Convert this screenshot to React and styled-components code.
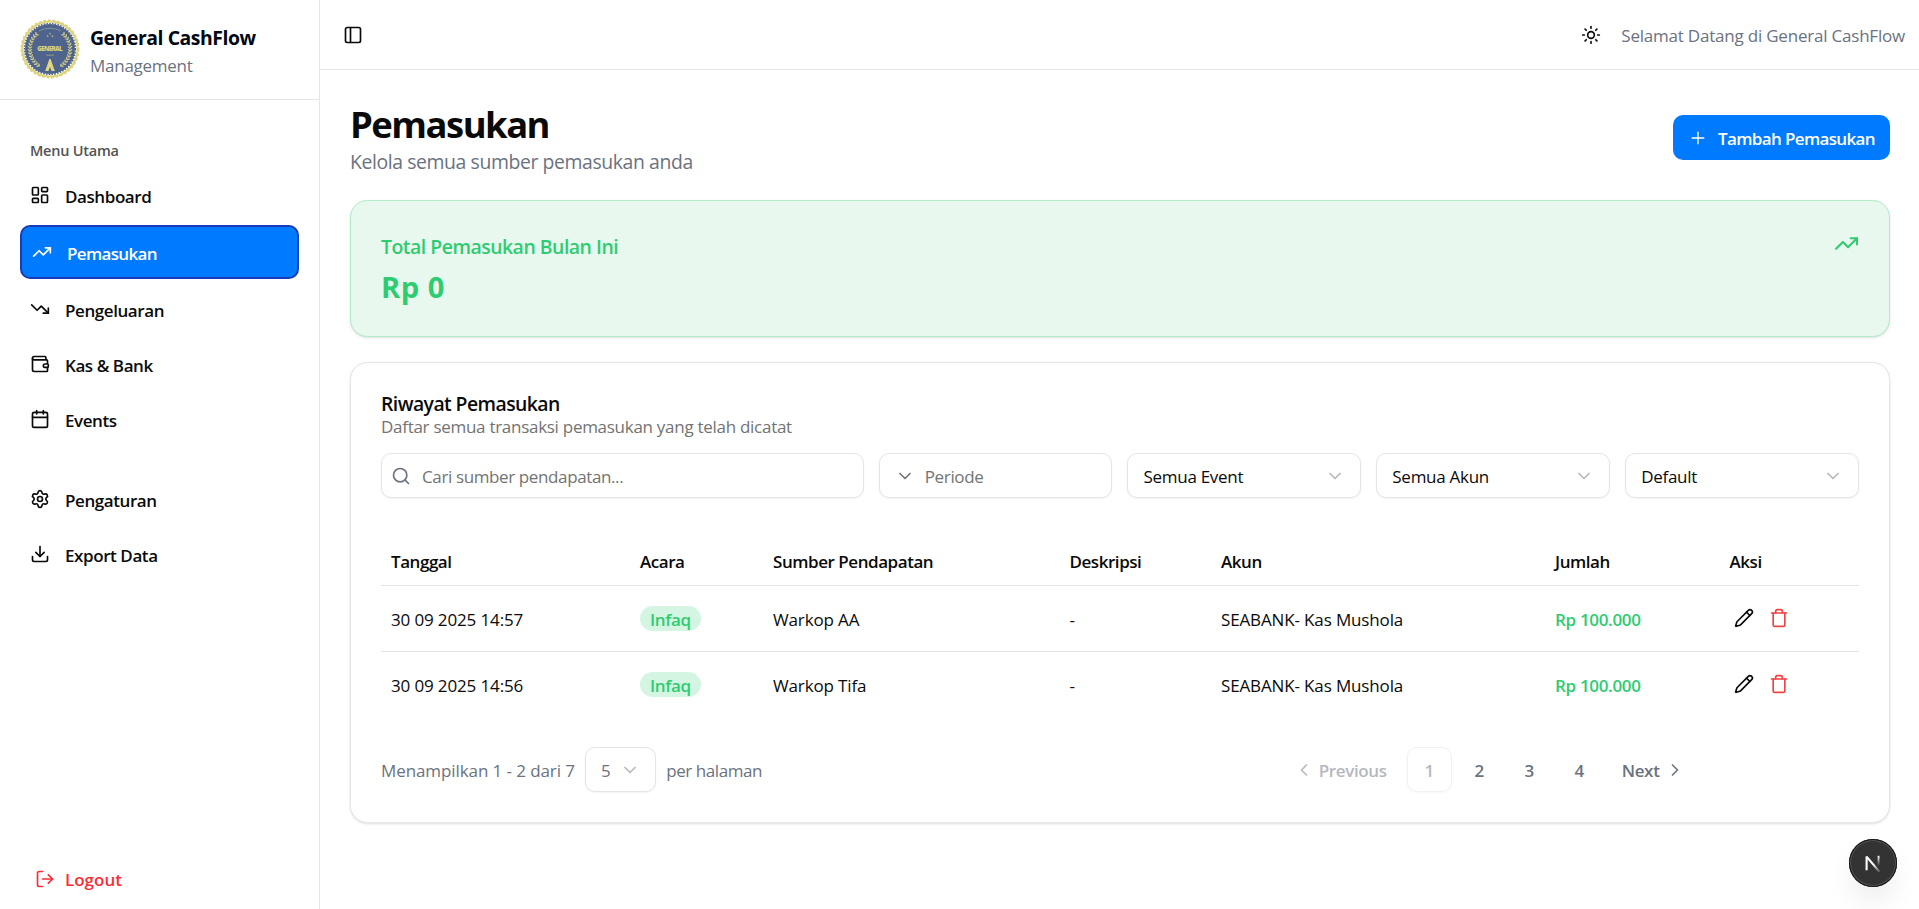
import React from 'react';
import styled, { createGlobalStyle, css } from 'styled-components';
import {
  LayoutDashboard, TrendingUp, TrendingDown, Wallet, Calendar, Settings, Download,
  LogOut, PanelLeft, Sun, Plus, Search, ChevronDown, ChevronLeft, ChevronRight, Pencil, Trash,
} from 'lucide-react';

const GlobalStyle = createGlobalStyle`
  *, *::before, *::after { box-sizing: border-box; }
  body {
    margin: 0;
    background: #fff;
    color: #0a0a0a;
    font-family: "Segoe UI", "Open Sans", "Noto Sans", sans-serif;
    font-size: 17px;
    line-height: 25px;
    overflow: hidden;
  }
  h1, h2, p { margin: 0; }
  button, input { font: inherit; letter-spacing: inherit; color: inherit; }
  svg { display: block; flex: none; }
`;

const border = '#e5e5e5';
const muted = '#6b7280';
const green = '#2ecc71';
const blue = '#007bff';

const Shell = styled.div`
  display: flex;
  height: 100vh;
`;

const Sidebar = styled.aside`
  display: flex;
  flex-direction: column;
  width: 320px;
  flex: none;
  border-right: 1px solid ${border};
`;

const Brand = styled.div`
  display: flex;
  align-items: center;
  gap: 10px;
  height: 100px;
  padding: 0 20px 1px;
  border-bottom: 1px solid ${border};
`;

const BrandText = styled.div`
  display: flex;
  flex-direction: column;
  padding-top: 3px;
`;

const BrandName = styled.span`
  font-size: 19.4px;
  font-weight: 700;
  line-height: 30px;
  letter-spacing: -0.44px;
  color: #030712;
`;

const BrandSub = styled.span`
  color: ${muted};
  letter-spacing: -0.26px;
`;

const Nav = styled.nav`
  display: flex;
  flex-direction: column;
  gap: 30px;
  flex: 1;
  padding: 30px 20px;
`;

const NavGroup = styled.div`
  display: flex;
  flex-direction: column;
  gap: 5px;
`;

const NavLabel = styled.div`
  display: flex;
  align-items: center;
  height: 40px;
  margin-bottom: -5px;
  padding: 0 10px;
  font-size: 14.5px;
  font-weight: 550;
  letter-spacing: -0.24px;
  color: #525252;
`;

const NavItem = styled.a`
  display: flex;
  align-items: center;
  gap: 15px;
  height: 50px;
  padding: 0 10px;
  border-radius: 10px;
  font-weight: 570;
  letter-spacing: -0.42px;

  ${(p) => p.$active && css`
    height: 54px;
    border: 2px solid #193cb8;
    background: ${blue};
    color: #fff;
    letter-spacing: -0.65px;
  `}
`;

const NavText = styled.span`
  padding-top: 2px;
`;

const LogoutButton = styled.a`
  display: flex;
  align-items: center;
  gap: 10px;
  height: 50px;
  margin: 0 20px 5px;
  padding: 0 15px;
  font-weight: 570;
  color: #fb2c36;
`;

const Content = styled.div`
  flex: 1;
  min-width: 0;
  display: flex;
  flex-direction: column;
`;

const Topbar = styled.header`
  display: flex;
  align-items: center;
  height: 70px;
  padding: 0 14px 0 23px;
  border-bottom: 1px solid ${border};
`;

const Greeting = styled.span`
  margin-left: 20px;
  padding-top: 1px;
  letter-spacing: -0.21px;
  color: ${muted};
`;

const Spacer = styled.div`
  flex: 1;
`;

const Main = styled.main`
  display: flex;
  flex-direction: column;
  gap: 25px;
  padding: 30px 29px 30px 30px;
`;

const PageHead = styled.div`
  display: flex;
  align-items: center;
  justify-content: space-between;
  height: 75px;
`;

const PageHeading = styled.div`
  padding-top: 3px;
`;

const PageTitle = styled.h1`
  font-size: 36.4px;
  font-weight: 700;
  line-height: 45px;
  letter-spacing: -1.5px;
`;

const PageSub = styled.p`
  font-size: 19.4px;
  line-height: 29px;
  letter-spacing: -0.4px;
  color: ${muted};
`;

const PrimaryButton = styled.button`
  display: flex;
  align-items: center;
  gap: 10px;
  height: 45px;
  padding: 1px 15px 0;
  border: 0;
  border-radius: 10px;
  background: ${blue};
  color: #fff;
  font-weight: 570;
  letter-spacing: -0.64px;
`;

const Card = styled.section`
  padding: 30px;
  border: 1px solid ${border};
  border-radius: 17.5px;
  background: #fff;
  box-shadow: 0 1px 3px rgba(0, 0, 0, 0.1), 0 1px 2px -1px rgba(0, 0, 0, 0.1);
`;

const SummaryCard = styled(Card)`
  display: flex;
  justify-content: space-between;
  height: 137px;
  border-color: #b1ebc9;
  background: #e9f8ef;
  color: ${green};
`;

const SummaryLabel = styled.p`
  padding-top: 1px;
  font-size: 19.4px;
  font-weight: 570;
  line-height: 30px;
  letter-spacing: -0.48px;
`;

const SummaryValue = styled.p`
  margin-top: 5px;
  font-size: 29.1px;
  font-weight: 700;
  line-height: 40px;
  letter-spacing: 0.5px;
`;

const CardTitle = styled.h2`
  height: 20px;
  font-size: 19.4px;
  font-weight: 600;
  line-height: 22px;
  letter-spacing: -0.57px;
`;

const CardSub = styled.p`
  height: 25px;
  line-height: 27px;
  color: #737373;
  letter-spacing: -0.28px;
`;

const Filters = styled.div`
  display: grid;
  grid-template-columns: repeat(6, 1fr);
  gap: 15px;
  margin-top: 15px;
`;

const field = css`
  display: flex;
  align-items: center;
  height: 45px;
  border: 1px solid ${border};
  border-radius: 10px;
  background: #fff;
  box-shadow: 0 1px 2px rgba(0, 0, 0, 0.05);
`;

const SearchField = styled.label`
  ${field}
  grid-column: span 2;
  gap: 11px;
  padding: 0 9px;
  color: ${muted};
`;

const SearchInput = styled.input`
  flex: 1;
  min-width: 0;
  border: 0;
  padding: 1px 0 0;
  outline: 0;
  background: none;
  letter-spacing: -0.38px;
  &::placeholder { color: #737373; opacity: 1; }
`;

const FieldText = styled.span`
  padding-top: 2px;
`;

const PeriodField = styled.button`
  ${field}
  gap: 10px;
  padding: 0 15px;
  color: #737373;
  letter-spacing: -0.33px;
`;

const SelectField = styled.button`
  ${field}
  justify-content: space-between;
  gap: 10px;
  padding: 0 15px;
  color: ${(p) => (p.$muted ? muted : 'inherit')};
  letter-spacing: -0.28px;
  svg { color: #737373; opacity: 0.5; }
`;

const Table = styled.table`
  width: 100%;
  margin-top: 37px;
  border-collapse: separate;
  border-spacing: 0;
  table-layout: fixed;
`;

const Col = styled.col`
  width: ${(p) => p.$w}px;
`;

const Th = styled.th`
  height: 51px;
  padding: 3px 10px 0;
  border-bottom: 1px solid ${border};
  text-align: left;
  font-weight: 600;
  letter-spacing: -0.45px;
`;

const Td = styled.td`
  height: ${(p) => (p.$last ? 65 : 66)}px;
  padding: 2px 10px 0;
  border-bottom: ${(p) => (p.$last ? 0 : 1)}px solid ${border};
  letter-spacing: -0.14px;
`;

const Amount = styled.span`
  font-weight: 570;
  letter-spacing: -0.32px;
  color: ${green};
`;

const Badge = styled.span`
  display: flex;
  align-items: center;
  width: fit-content;
  height: 25px;
  margin-bottom: 2px;
  padding: 2px 10px 0;
  border-radius: 13px;
  background: #d5f5e3;
  color: ${green};
  font-weight: 600;
  letter-spacing: -0.35px;
`;

const Actions = styled.div`
  display: flex;
  gap: 15px;
  padding-left: 4px;
  margin-bottom: 3px;
`;

const DeleteIcon = styled(Trash)`
  color: #ef4444;
`;

const Footer = styled.div`
  display: flex;
  align-items: center;
  justify-content: space-between;
  margin-top: 30px;
  color: ${muted};
`;

const PageSize = styled.div`
  display: flex;
  align-items: center;
  gap: 10px;
  letter-spacing: -0.09px;
`;

const PerPage = styled(FieldText)`
  letter-spacing: -0.45px;
`;

const Pagination = styled.div`
  display: flex;
  align-items: center;
  gap: 5px;
  margin-right: 161.5px;
  font-weight: 570;
  letter-spacing: -0.35px;
`;

const PageButton = styled.button`
  display: flex;
  align-items: center;
  justify-content: center;
  gap: 5px;
  height: 45px;
  min-width: 45px;
  padding: ${(p) => p.$pad || '0'};
  border: 1px solid ${(p) => (p.$current ? border : 'transparent')};
  border-radius: 10px;
  background: #fff;
  box-shadow: ${(p) => (p.$current ? '0 1px 2px rgba(0, 0, 0, 0.05)' : 'none')};
  opacity: ${(p) => (p.$dim ? 0.5 : 1)};
`;

const DevBadge = styled.div`
  position: fixed;
  right: 22.5px;
  bottom: 22px;
  display: grid;
  place-items: center;
  width: 48px;
  height: 48px;
  border-radius: 50%;
  background: #333;
  box-shadow: inset 0 0 0 1px #171717, inset 0 0 0 2px #525252,
    0 16px 32px -8px rgba(0, 0, 0, 0.14);
`;

function laurel(side) {
  return Array.from({ length: 13 }, (_, i) => {
    const a = ((-46 + i * 8.6) * Math.PI) / 180;
    const deg = (a * 180) / Math.PI;
    return (
      <g key={i} transform={`translate(${30 + side * Math.cos(a) * 20} ${30 + Math.sin(a) * 20})`}>
        <ellipse cx="1" rx="1.9" ry="0.8" transform={`rotate(${side * (deg - 40)}) scale(${side} 1)`} />
        <ellipse cx="-1" rx="1.7" ry="0.7" transform={`rotate(${side * (deg + 40)}) scale(${side} 1)`} />
      </g>
    );
  });
}

function Logo() {
  return (
    <svg width="60" height="60" viewBox="0 0 60 60">
      <circle cx="30" cy="30" r="27.6" fill="#fdfce9" stroke="#ddd27c" strokeWidth="2" />
      <circle cx="30" cy="30" r="28.8" fill="none" stroke="#ddd27c" strokeWidth="1.4" strokeDasharray="2.6 2" />
      <circle cx="30" cy="30" r="25" fill="#4f648c" />
      <circle cx="30" cy="30" r="25.3" fill="none" stroke="#4f648c" strokeWidth="1.6" strokeDasharray="1.6 1.2" />
      <g fill="#c9c587">
        {laurel(1)}
        {laurel(-1)}
        <path d="M30 13.4l1 1.8h-2zM27.6 16l1 1.7h-2zM32.4 16l1 1.7h-2z" />
      </g>
      <path d="M29.4 40h1.2l4.2 12h-3.2L30 48 28.4 52h-3.2z" fill="#e0d77f" />
      <path d="M19 11.8Q30 6.8 41 11.8" fill="none" stroke="#8796a0" strokeWidth="0.9" />
      <path d="M26 36.2h8" stroke="#94a08a" strokeWidth="0.9" />
      <text x="30" y="32.4" textAnchor="middle" textLength="25.5" fontFamily="Open Sans, sans-serif" fontSize="6.4" fontWeight="800" fill="#d8d080">GENERAL</text>
    </svg>
  );
}

function DevMark() {
  return (
    <svg width="18" height="18" viewBox="0 0 18 18" fill="none" strokeWidth="2.1">
      <defs>
        <linearGradient id="diag" x1="10" y1="10" x2="16" y2="18" gradientUnits="userSpaceOnUse">
          <stop stopColor="#fff" />
          <stop offset="1" stopColor="#fff" stopOpacity="0.1" />
        </linearGradient>
        <linearGradient id="stem" x1="0" y1="2" x2="0" y2="12" gradientUnits="userSpaceOnUse">
          <stop stopColor="#fff" />
          <stop offset="1" stopColor="#fff" stopOpacity="0" />
        </linearGradient>
      </defs>
      <polyline points="2.6,16.2 2.6,2.6 15.6,18" stroke="url(#diag)" strokeLinejoin="bevel" />
      <rect x="13.6" y="1.8" width="1.9" height="10.5" fill="url(#stem)" />
    </svg>
  );
}

const mainMenu = [
  ['Dashboard', LayoutDashboard],
  ['Pemasukan', TrendingUp],
  ['Pengeluaran', TrendingDown],
  ['Kas & Bank', Wallet],
  ['Events', Calendar],
];

const toolsMenu = [
  ['Pengaturan', Settings],
  ['Export Data', Download],
];

const columns = [
  ['Tanggal', 249],
  ['Acara', 133],
  ['Sumber Pendapatan', 296.5],
  ['Deskripsi', 151.5],
  ['Akun', 334],
  ['Jumlah', 174.5],
  ['Aksi', 139.5],
];

const rows = [
  { date: '30 09 2025 14:57', event: 'Infaq', source: 'Warkop AA', note: '-', account: 'SEABANK- Kas Mushola', amount: 'Rp 100.000' },
  { date: '30 09 2025 14:56', event: 'Infaq', source: 'Warkop Tifa', note: '-', account: 'SEABANK- Kas Mushola', amount: 'Rp 100.000' },
];

function Menu({ items }) {
  return items.map(([label, Icon]) => (
    <NavItem key={label} $active={label === 'Pemasukan'}>
      <Icon size={20} />
      <NavText>{label}</NavText>
    </NavItem>
  ));
}

function Select({ label, muted: isMuted }) {
  return (
    <SelectField $muted={isMuted}>
      <FieldText>{label}</FieldText>
      <ChevronDown size={20} />
    </SelectField>
  );
}

export default function App() {
  return (
    <Shell>
      <GlobalStyle />
      <Sidebar>
        <Brand>
          <Logo />
          <BrandText>
            <BrandName>General CashFlow</BrandName>
            <BrandSub>Management</BrandSub>
          </BrandText>
        </Brand>
        <Nav>
          <NavGroup>
            <NavLabel>Menu Utama</NavLabel>
            <Menu items={mainMenu} />
          </NavGroup>
          <NavGroup>
            <Menu items={toolsMenu} />
          </NavGroup>
        </Nav>
        <LogoutButton>
          <LogOut size={20} />
          <span>Logout</span>
        </LogoutButton>
      </Sidebar>
      <Content>
        <Topbar>
          <PanelLeft size={20} />
          <Spacer />
          <Sun size={20} />
          <Greeting>Selamat Datang di General CashFlow</Greeting>
        </Topbar>
        <Main>
          <PageHead>
            <PageHeading>
              <PageTitle>Pemasukan</PageTitle>
              <PageSub>Kelola semua sumber pemasukan anda</PageSub>
            </PageHeading>
            <PrimaryButton>
              <Plus size={20} strokeWidth={1.6} />
              <span>Tambah Pemasukan</span>
            </PrimaryButton>
          </PageHead>
          <SummaryCard>
            <div>
              <SummaryLabel>Total Pemasukan Bulan Ini</SummaryLabel>
              <SummaryValue>Rp 0</SummaryValue>
            </div>
            <TrendingUp size={25} />
          </SummaryCard>
          <Card>
            <CardTitle>Riwayat Pemasukan</CardTitle>
            <CardSub>Daftar semua transaksi pemasukan yang telah dicatat</CardSub>
            <Filters>
              <SearchField>
                <Search size={20} />
                <SearchInput placeholder="Cari sumber pendapatan..." />
              </SearchField>
              <PeriodField>
                <ChevronDown size={20} />
                <FieldText>Periode</FieldText>
              </PeriodField>
              <Select label="Semua Event" />
              <Select label="Semua Akun" />
              <Select label="Default" />
            </Filters>
            <Table>
              <colgroup>
                {columns.map(([name, w]) => <Col key={name} $w={w} />)}
              </colgroup>
              <thead>
                <tr>{columns.map(([name]) => <Th key={name}>{name}</Th>)}</tr>
              </thead>
              <tbody>
                {rows.map((r, i) => {
                  const last = i === rows.length - 1;
                  return (
                    <tr key={r.date}>
                      <Td $last={last}>{r.date}</Td>
                      <Td $last={last}><Badge>{r.event}</Badge></Td>
                      <Td $last={last}>{r.source}</Td>
                      <Td $last={last}>{r.note}</Td>
                      <Td $last={last}>{r.account}</Td>
                      <Td $last={last}><Amount>{r.amount}</Amount></Td>
                      <Td $last={last}>
                        <Actions>
                          <Pencil size={20} />
                          <DeleteIcon size={20} />
                        </Actions>
                      </Td>
                    </tr>
                  );
                })}
              </tbody>
            </Table>
            <Footer>
              <PageSize>
                <FieldText>Menampilkan 1 - 2 dari 7</FieldText>
                <Select label="5" muted />
                <PerPage>per halaman</PerPage>
              </PageSize>
              <Pagination>
                <PageButton $dim $pad="0 14px 0 12px">
                  <ChevronLeft size={20} />
                  <FieldText>Previous</FieldText>
                </PageButton>
                <PageButton $current $dim><FieldText>1</FieldText></PageButton>
                <PageButton><FieldText>2</FieldText></PageButton>
                <PageButton><FieldText>3</FieldText></PageButton>
                <PageButton><FieldText>4</FieldText></PageButton>
                <PageButton $pad="0 12px 0 14px">
                  <FieldText>Next</FieldText>
                  <ChevronRight size={20} />
                </PageButton>
              </Pagination>
            </Footer>
          </Card>
        </Main>
      </Content>
      <DevBadge>
        <DevMark />
      </DevBadge>
    </Shell>
  );
}
